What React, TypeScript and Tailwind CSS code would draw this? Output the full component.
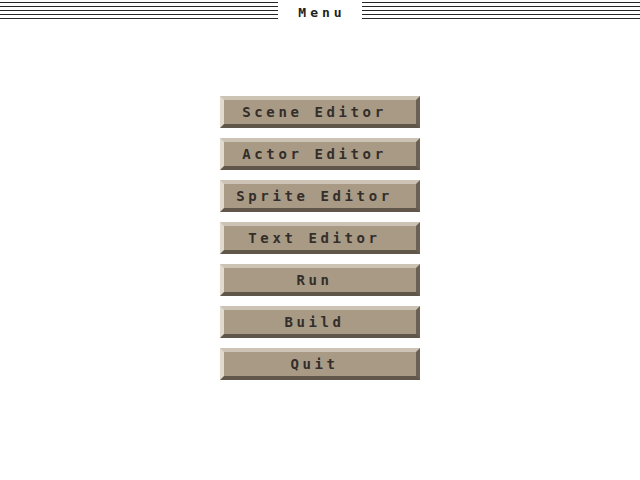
const items = [
  "Scene Editor",
  "Actor Editor",
  "Sprite Editor",
  "Text Editor",
  "Run",
  "Build",
  "Quit",
];

function Lines() {
  return (
    <div className="flex flex-col gap-[3px] pt-[2px]">
      {[0, 1, 2, 3, 4].map((i) => (
        <div key={i} className="h-px bg-[#262626]" />
      ))}
    </div>
  );
}

function MenuButton({ label }: { label: string }) {
  return (
    <button className="w-[200px] h-[32px] bg-[#a89a85] border-t-4 border-l-4 border-r-4 border-b-4 border-t-[#cdc3b4] border-l-[#e1dacf] border-r-[#6a6054] border-b-[#605649] flex items-center justify-center">
      <span className="font-['DejaVu_Sans_Mono',monospace] font-bold text-[14px] leading-none tracking-[3.6px] text-[#332e2a] pr-[11px]">
        {label}
      </span>
    </button>
  );
}

export default function App() {
  return (
    <div className="w-[640px] h-[480px] bg-white font-['DejaVu_Sans_Mono',monospace]">
      <div className="flex h-[24px]">
        <div className="w-[278px]">
          <Lines />
        </div>
        <div className="w-[84px] flex justify-center pt-[6px]">
          <span className="font-bold text-[13px] leading-none tracking-[4px] text-[#1e1e1e] pl-[4px]">
            Menu
          </span>
        </div>
        <div className="flex-1">
          <Lines />
        </div>
      </div>
      <div className="flex flex-col items-center gap-[10px] pt-[72px]">
        {items.map((s) => (
          <MenuButton key={s} label={s} />
        ))}
      </div>
    </div>
  );
}
